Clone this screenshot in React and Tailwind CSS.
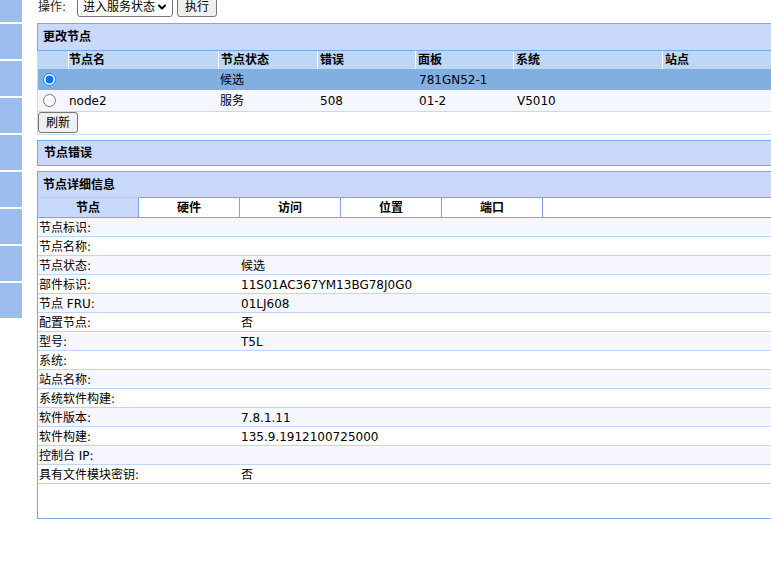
import { ChevronDown } from "lucide-react";

const FONT = "font-['DejaVu_Sans','Noto_Sans_CJK_SC',sans-serif]";

const columns = [
  { label: "", w: "w-[30px]" },
  { label: "节点名", w: "w-[150px]" },
  { label: "节点状态", w: "w-[99px]" },
  { label: "错误", w: "w-[98px]" },
  { label: "面板", w: "w-[98px]" },
  { label: "系统", w: "w-[149px]" },
  { label: "站点", w: "flex-1" },
];

const nodes = [
  { selected: true, name: "", status: "候选", error: "", panel: "781GN52-1", system: "", site: "" },
  { selected: false, name: "node2", status: "服务", error: "508", panel: "01-2", system: "V5010", site: "" },
];

const tabs = ["节点", "硬件", "访问", "位置", "端口"];

const details = [
  ["节点标识:", ""],
  ["节点名称:", ""],
  ["节点状态:", "候选"],
  ["部件标识:", "11S01AC367YM13BG78J0G0"],
  ["节点 FRU:", "01LJ608"],
  ["配置节点:", "否"],
  ["型号:", "T5L"],
  ["系统:", ""],
  ["站点名称:", ""],
  ["系统软件构建:", ""],
  ["软件版本:", "7.8.1.11"],
  ["软件构建:", "135.9.1912100725000"],
  ["控制台 IP:", ""],
  ["具有文件模块密钥:", "否"],
];

function Sidebar() {
  const blocks = Array.from({ length: 9 });
  return (
    <div className="w-[22px] shrink-0 flex flex-col gap-[2px] -mt-[13px]">
      {blocks.map((_, i) => (
        <div key={i} className="h-[35px] bg-[#9dbdee]" />
      ))}
    </div>
  );
}

function FormButton({ children, className = "" }) {
  return (
    <button
      className={`h-[21px] px-[7px] bg-[#efefef] border border-[#767676] rounded-[3px] text-[12px] leading-[18px] text-black ${className}`}
    >
      {children}
    </button>
  );
}

function Cell({ col, idx, children, header }) {
  return (
    <div
      className={`${col.w} shrink-0 h-full flex items-center ${idx > 0 ? "border-l border-white" : ""} ${idx === 1 ? "pl-0" : "pl-[2px]"} ${header ? "font-bold" : ""}`}
    >
      {children}
    </div>
  );
}

export default function App() {
  return (
    <div className={`w-[771px] h-[581px] overflow-hidden bg-white flex text-[12px] text-black ${FONT}`}>
      <Sidebar />
      <div className="ml-[15px] w-[900px] shrink-0 -mt-[4px]">
        {/* action row */}
        <div className="h-[21px] flex items-center pl-[1px]">
          <span className="text-[#222]">操作:</span>
          <div className="ml-[11px] h-[21px] w-[96px] flex items-center justify-between pl-[5px] pr-[4px] border border-[#767676] rounded-[3px]">
            <span>进入服务状态</span>
            <ChevronDown className="w-[12px] h-[12px]" strokeWidth={4} />
          </div>
          <FormButton className="ml-[4px]">执行</FormButton>
        </div>

        {/* change node */}
        <div className="mt-[6px]">
          <div className="h-[28px] border border-r-0 border-[#7aa5e8] bg-[#c9d9fc] flex items-center pl-[5px] font-bold">
            更改节点
          </div>
          <div className="border-l border-b border-[#c6d9f5]">
            <div className="h-[18px] flex bg-[#bdd7f5] leading-[18px]">
              {columns.map((c, i) => (
                <Cell key={i} col={c} idx={i} header>
                  {c.label}
                </Cell>
              ))}
            </div>
            {nodes.map((n, r) => (
              <div
                key={r}
                className={`flex ${n.selected ? "h-[21px] bg-[#80afe0]" : "h-[22px] bg-[#f6f7fe] border-b border-[#c6d9f5]"}`}
              >
                <div className="w-[30px] shrink-0 flex items-center">
                  <input
                    type="radio"
                    name="node"
                    defaultChecked={n.selected}
                    className="ml-[5px] w-[13px] h-[13px]"
                  />
                </div>
                <div className="w-[150px] shrink-0 flex items-center pl-[1px]">{n.name}</div>
                <div className="w-[99px] shrink-0 flex items-center pl-[2px]">{n.status}</div>
                <div className="w-[98px] shrink-0 flex items-center pl-[3px]">{n.error}</div>
                <div className="w-[98px] shrink-0 flex items-center pl-[4px]">{n.panel}</div>
                <div className="w-[149px] shrink-0 flex items-center pl-[4px]">{n.system}</div>
                <div className="flex-1 flex items-center pl-[2px]">{n.site}</div>
              </div>
            ))}
            <div className="h-[22px] flex items-start">
              <FormButton className="ml-0">刷新</FormButton>
            </div>
          </div>
        </div>

        {/* node errors */}
        <div className="mt-[5px] h-[26px] border border-r-0 border-[#7aa5e8] bg-[#c9d9fc] flex items-center pl-[6px] font-bold">
          节点错误
        </div>

        {/* node details */}
        <div className="mt-[5px] border border-r-0 border-[#7aa5e8]">
          <div className="h-[25px] bg-[#c9d9fc] flex items-center pl-[5px] font-bold">
            节点详细信息
          </div>
          <div className="h-[21px] flex border-b border-[#7aa5e8]">
            {tabs.map((t, i) => (
              <div
                key={t}
                className={`w-[101px] shrink-0 border-r border-[#7aa5e8] flex items-center justify-center font-bold ${i === 0 ? "bg-[#c9d9fc] border-t border-t-[#b4cbf3]" : "bg-white border-t border-t-[#7aa5e8]"}`}
              >
                {t}
              </div>
            ))}
            <div className="flex-1 border-t border-[#7aa5e8]" />
          </div>
          {details.map(([label, value], i) => (
            <div
              key={label}
              className={`h-[19px] flex items-center pt-[2px] border-b border-[#bfd5f2] ${i % 2 === 0 ? "bg-[#f6f7fe]" : "bg-white"}`}
            >
              <div className="w-[203px] shrink-0 pl-[1px]">{label}</div>
              <div>{value}</div>
            </div>
          ))}
          <div className="h-[34px]" />
        </div>
      </div>
    </div>
  );
}
